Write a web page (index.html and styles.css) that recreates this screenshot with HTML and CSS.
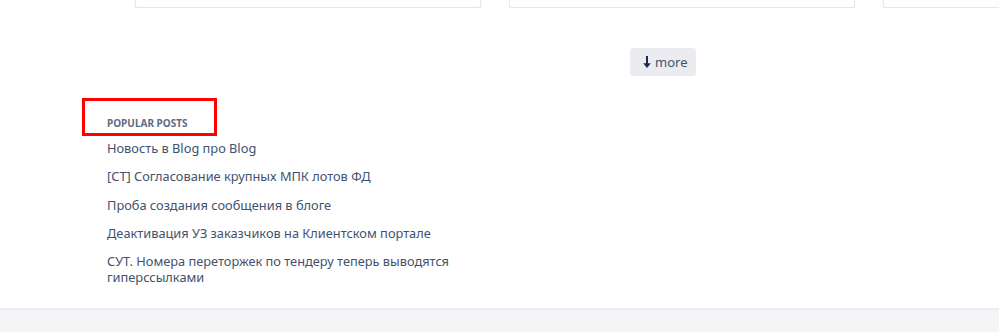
FILE: index.html
```html
<!DOCTYPE html>
<html lang="en">
<head>
    <meta charset="UTF-8">
    <meta name="viewport" content="width=device-width, initial-scale=1.0">
    <title>Blog</title>
    <link rel="stylesheet" href="styles.css">
</head>
<body>
    <div class="page">
        <div class="cards">
            <div class="card"></div>
            <div class="card"></div>
            <div class="card"></div>
        </div>

        <div class="more-row">
            <button class="btn-more">
                <svg class="arrow" width="10" height="14" viewBox="0 0 10 14">
                    <path d="M5 1v8" stroke="#172b4d" stroke-width="2" fill="none"/>
                    <path d="M1.2 8.2h7.6L5 13z" fill="#172b4d"/>
                </svg>
                <span>more</span>
            </button>
        </div>

        <div class="popular">
            <div class="highlight"></div>
            <div class="popular-title">POPULAR POSTS</div>
            <ul class="popular-list">
                <li><a href="#">Новость в Blog про Blog</a></li>
                <li><a href="#">[СТ] Согласование крупных МПК лотов ФД</a></li>
                <li><a href="#">Проба создания сообщения в блоге</a></li>
                <li><a href="#">Деактивация УЗ заказчиков на Клиентском портале</a></li>
                <li><a href="#">СУТ. Номера переторжек по тендеру теперь выводятся гиперссылками</a></li>
            </ul>
        </div>
    </div>

    <div class="footer"></div>
</body>
</html>
```

FILE: styles.css
```css
* {
    margin: 0;
    padding: 0;
    box-sizing: border-box;
}

html, body {
    height: 100%;
}

body {
    font-family: 'Noto Sans', 'Open Sans', sans-serif;
    background-color: #fff;
    color: #42526e;
    display: flex;
    flex-direction: column;
    overflow: hidden;
}

.cards {
    display: flex;
    gap: 28px;
    padding-left: 135px;
    margin-top: -92px;
    overflow: hidden;
}

.card {
    flex: 0 0 346px;
    height: 100px;
    background-color: #fff;
    border: 1px solid #e4e6ea;
    border-radius: 3px;
    box-shadow: 0 1px 1px rgba(9, 30, 66, 0.1);
}

.more-row {
    padding-left: 630px;
    margin-top: 40px;
}

.btn-more {
    display: flex;
    align-items: center;
    gap: 3px;
    height: 28px;
    width: 66px;
    padding: 0 0 0 12px;
    border: none;
    border-radius: 3px;
    background-color: #ebecf0;
    color: #42526e;
    font-family: inherit;
    font-size: 13px;
    cursor: pointer;
}

.arrow {
    display: block;
}

.popular {
    position: relative;
    padding-left: 107px;
    margin-top: 39px;
    padding-bottom: 23px;
}

.highlight {
    position: absolute;
    left: 82px;
    top: -17px;
    width: 135px;
    height: 38px;
    border: 3px solid #ff0000;
}

.popular-title {
    font-size: 10px;
    font-weight: 700;
    line-height: 16px;
    color: #5e6c84;
    margin-bottom: 9px;
}

.popular-list {
    list-style: none;
    display: flex;
    flex-direction: column;
    gap: 12.25px;
    width: 360px;
    font-size: 12.8px;
    line-height: 16px;
}

.popular-list a {
    color: #42526e;
    text-decoration: none;
}

.footer {
    flex: 1;
    background-color: #f4f5f7;
    border-top: 2px solid #ebecf0;
}
```
